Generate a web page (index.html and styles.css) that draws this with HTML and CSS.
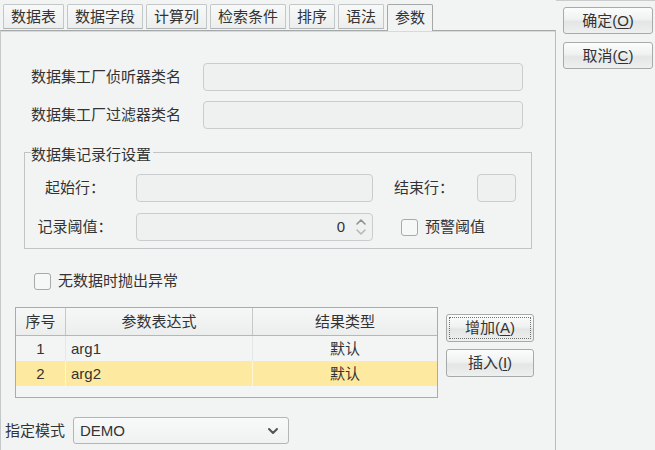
FILE: index.html
```html
<!DOCTYPE html>
<html lang="zh">
<head>
<meta charset="utf-8">
<title>参数</title>
<link rel="stylesheet" href="styles.css">
</head>
<body>
<div class="window">
  <div class="main">
    <div class="tabs">
      <div class="tab">数据表</div>
      <div class="tab">数据字段</div>
      <div class="tab">计算列</div>
      <div class="tab">检索条件</div>
      <div class="tab">排序</div>
      <div class="tab">语法</div>
      <div class="tab active">参数</div>
    </div>
    <div class="panel">
      <div class="field-row first">
        <span class="field-label">数据集工厂侦听器类名</span>
        <div class="input wide"></div>
      </div>
      <div class="field-row">
        <span class="field-label">数据集工厂过滤器类名</span>
        <div class="input wide"></div>
      </div>
      <fieldset class="group">
        <legend class="group-title">数据集记录行设置</legend>
        <div class="g-row">
          <span class="g-label">起始行：</span>
          <div class="input g-input"></div>
          <span class="g-label2">结束行：</span>
          <div class="input small"></div>
        </div>
        <div class="g-row">
          <span class="g-label">记录阈值：</span>
          <div class="input g-input spinner">
            <span class="spin-val">0</span>
            <svg class="spin-arrows" width="12" height="20" viewBox="0 0 12 20">
              <path d="M2 7 L6 3 L10 7" fill="none" stroke="#8c9090" stroke-width="1.6" stroke-linecap="round" stroke-linejoin="round"/>
              <path d="M2 13 L6 17 L10 13" fill="none" stroke="#b4b8b8" stroke-width="1.6" stroke-linecap="round" stroke-linejoin="round"/>
            </svg>
          </div>
          <label class="check warn"><span class="box"></span>预警阈值</label>
        </div>
      </fieldset>
      <label class="check standalone"><span class="box"></span>无数据时抛出异常</label>
      <div class="table-row">
        <div class="tbl">
          <div class="tr head">
            <div class="td c1">序号</div>
            <div class="td c2 center">参数表达式</div>
            <div class="td c3">结果类型</div>
          </div>
          <div class="tr">
            <div class="td c1">1</div>
            <div class="td c2">arg1</div>
            <div class="td c3">默认</div>
          </div>
          <div class="tr selected">
            <div class="td c1">2</div>
            <div class="td c2">arg2</div>
            <div class="td c3">默认</div>
          </div>
        </div>
        <div class="table-buttons">
          <button class="btn focused">增加(<u>A</u>)</button>
          <button class="btn">插入(<u>I</u>)</button>
        </div>
      </div>
      <div class="mode-row">
        <span class="mode-label">指定模式</span>
        <div class="select">
          <span>DEMO</span>
          <svg width="12" height="8" viewBox="0 0 12 8">
            <path d="M2 2 L6 6 L10 2" fill="none" stroke="#505454" stroke-width="2" stroke-linecap="round" stroke-linejoin="round"/>
          </svg>
        </div>
      </div>
    </div>
  </div>
  <div class="side">
    <button class="btn side-btn">确定(<u>O</u>)</button>
    <button class="btn side-btn">取消(<u>C</u>)</button>
  </div>
</div>
</body>
</html>
```

FILE: styles.css
```css
* { box-sizing: border-box; }
html, body {
  margin: 0;
  padding: 0;
}
body {
  width: 655px;
  height: 450px;
  overflow: hidden;
  background: #f2f4f4;
  color: #333;
  font-family: "Liberation Sans", "Noto Sans CJK SC", sans-serif;
  font-size: 15px;
  line-height: 18px;
}
.window {
  display: flex;
  height: 450px;
}
.main {
  width: 556px;
  display: flex;
  flex-direction: column;
}
.tabs {
  height: 30px;
  display: flex;
  align-items: flex-end;
  gap: 3px;
  padding-left: 3px;
  position: relative;
  z-index: 1;
}
.tab {
  height: 25px;
  margin-bottom: 1px;
  padding: 0 7px;
  border: 1px solid #c3c7c7;
  border-bottom-color: #b0b4b4;
  border-radius: 2px 2px 0 0;
  background: linear-gradient(#f8f9f9, #eceeee);
  display: flex;
  align-items: center;
  white-space: nowrap;
}
.tab.active {
  height: 27px;
  margin-bottom: -1px;
  border-color: #a4a8a8;
  border-bottom: none;
  background: #f2f4f4;
}
.panel {
  flex: 1;
  border-top: 1px solid #a4a8a8;
  border-left: 1px solid #c4c8c8;
  border-right: 1px solid #b8bcbc;
  box-shadow: inset 0 1px 0 #d6dada;
  display: flex;
  flex-direction: column;
  align-items: flex-start;
}
.field-row {
  display: flex;
  align-items: center;
  padding-left: 30px;
  margin-top: 10px;
}
.field-row.first { margin-top: 32px; }
.field-label {
  width: 172px;
  white-space: nowrap;
}
.input {
  height: 28px;
  border: 1px solid #c9cdcd;
  border-radius: 4px;
  background: #eff1f1;
}
.input.wide { width: 320px; }
.group {
  margin: 11px 0 0 23px;
  width: 508px;
  min-inline-size: 0;
  padding: 10px 0 7px 0;
  border: 1px solid #c0c4c4;
  border-radius: 0;
}
.group-title {
  margin-left: 6px;
  padding: 6px 2px 0 0;
  line-height: 18px;
}
.g-row {
  display: flex;
  align-items: center;
  height: 28px;
}
.g-row + .g-row { margin-top: 11px; }
.g-label {
  width: 100px;
  text-align: center;
  white-space: nowrap;
}
.g-input {
  width: 237px;
  margin-left: 11px;
}
.g-label2 {
  width: 60px;
  margin-left: 21px;
  white-space: nowrap;
}
.input.small {
  width: 39px;
  margin-left: 23px;
}
.spinner {
  display: flex;
  align-items: center;
  justify-content: flex-end;
}
.spin-val { line-height: 18px; }
.spin-arrows {
  margin-left: 10px;
  margin-right: 5px;
}
.check {
  display: flex;
  align-items: center;
  white-space: nowrap;
}
.box {
  width: 17px;
  height: 17px;
  border: 1px solid #a6aaaa;
  border-radius: 3px;
  background: #f6f7f7;
  margin-right: 7px;
}
.check.warn { margin-left: 28px; }
.check.standalone {
  margin: 23px 0 0 33px;
}
.table-row {
  display: flex;
  align-items: flex-start;
  margin: 17px 0 0 14px;
}
.tbl {
  width: 423px;
  height: 91px;
  border: 1px solid #a8acac;
  background: #f3f5f5;
}
.tr {
  display: flex;
  height: 25px;
}
.tr.head {
  height: 28px;
  border-bottom: 1px solid #b4b8b8;
  background: linear-gradient(#f6f7f7, #eceeee);
}
.td {
  display: flex;
  align-items: center;
  white-space: nowrap;
}
.c1 { width: 49px; justify-content: center; }
.c2 { width: 187px; border-left: 1px solid #e6e8e8; padding-left: 5px; }
.c3 { width: 185px; border-left: 1px solid #e6e8e8; justify-content: center; }
.head .c2, .head .c3 { border-left-color: #c4c8c8; }
.head .c2.center { justify-content: center; padding-left: 0; }
.tr.selected { background: #fde9a0; }
.tr.selected .c2, .tr.selected .c3 { border-left-color: #fff6d4; }
.table-buttons {
  display: flex;
  flex-direction: column;
  gap: 7px;
  margin: 7px 0 0 8px;
}
.btn {
  font: inherit;
  color: #333;
  height: 28px;
  width: 88px;
  padding: 0;
  border: 1px solid #a6aaaa;
  border-radius: 3px;
  background: linear-gradient(#fbfcfc 0%, #f0f2f2 45%, #e4e6e6 55%, #eef0f0 100%);
  display: flex;
  align-items: center;
  justify-content: center;
}
.btn u { text-underline-offset: 2px; }
.btn.focused {
  outline: 1px dotted #6c7070;
  outline-offset: -4px;
}
.mode-row {
  display: flex;
  align-items: center;
  margin: 19px 0 0 4px;
}
.mode-label { width: 60px; white-space: nowrap; }
.select {
  margin-left: 8px;
  width: 216px;
  height: 27px;
  border: 1px solid #b2b6b6;
  border-radius: 3px;
  background: linear-gradient(#f8f9f9, #f0f2f2);
  display: flex;
  align-items: center;
  justify-content: space-between;
  padding: 0 9px 0 6px;
}
.side {
  flex: 1;
  display: flex;
  flex-direction: column;
  gap: 8px;
  padding: 7px 0 0 7px;
  border-top: 1px solid #c8cccc;
}
.side-btn {
  width: 90px;
  height: 27px;
}
.side .btn:first-child { margin-top: -1px; }
```
